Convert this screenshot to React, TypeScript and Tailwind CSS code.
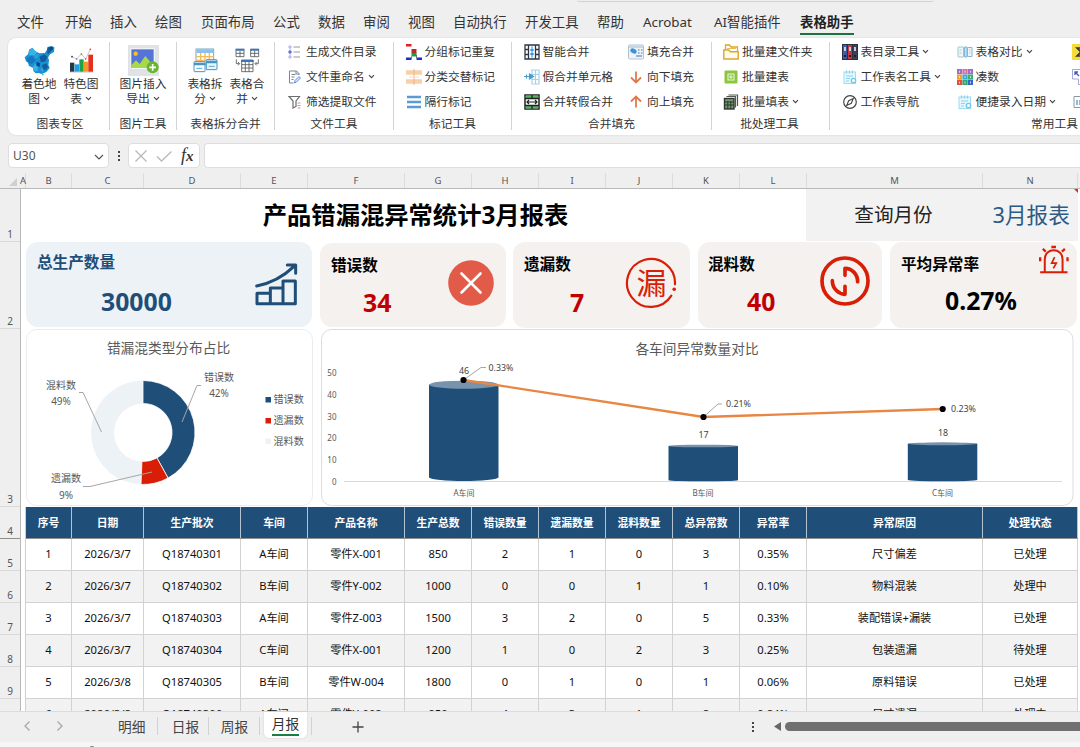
import React from "react";
import type { ReactNode } from "react";

const Chevron = () => (
  <svg className="ml-[3px] inline-block h-[7px] w-[7px] shrink-0" viewBox="0 0 7 7" fill="none" stroke="#444" strokeWidth="1.1">
    <path d="M1 2.2 3.5 4.7 6 2.2" />
  </svg>
);

/* ---------- large ribbon icons ---------- */

const MapIcon = () => (
  <svg className="h-[31px] w-[31px]" viewBox="73 129 94 94">
    <path fill="#1c8fd0" d="M75 166l10-9 4-14 10-6 7 10 14 7 16-1 6-8 2-10 12-3 9 4-1 14-12 7-6 10 3 8-2 14 4 10-10 12-9 4-6 2-8-3-10 1-7-8-1-9-12-5-3-11-6-4z" />
    <path fill="#36b3e6" d="M89 145l10-7 7 9 8 5-10 9-17-1zM100 195l8-10 8 8-2 16-8-1-6-6z" />
    <path fill="#0f5f9e" d="M143 144l4-9 8 2-2 14-8 6zM120 165l14-8 10 8-6 14-14 2zM128 190l12-6 6 10-6 10-10 2z" />
    <path fill="#1478be" d="M80 171l18-10 10 14-12 12-12-6z" />
    <path fill="#0b4a86" d="M150 135l10-1 1 9-9 5zM112 180l10 4-2 12-10-4z" />
    <path fill="#2ba4dd" d="M104 160l14-4-2 10-10 4zM122 202l8-4 4 8-6 6z" />
    <circle cx="130" cy="219" r="2.500" fill="#35b8a8" />
  </svg>
);

const ChartIcon = () => (
  <svg className="h-[25px] w-[25px]" viewBox="208 139 75 75">
    <rect x="210" y="209" width="72" height="4" fill="#cfd3d6" />
    <rect x="211" y="183" width="13" height="27" fill="#263846" />
    <rect x="225" y="188" width="13" height="22" fill="#1aa0e8" />
    <rect x="239" y="173" width="13" height="37" fill="#20a04a" />
    <rect x="253" y="180" width="13" height="30" fill="#f29a1f" />
    <rect x="266" y="159" width="14" height="51" fill="#e3311d" />
    <path d="M217 165l14 7 14-15 13 15 14-29" fill="none" stroke="#c9a0a0" strokeWidth="2" />
    <circle cx="217" cy="165" r="2.500" fill="#263846" />
    <circle cx="231" cy="172" r="2.500" fill="#3b6fe0" />
    <circle cx="245" cy="157" r="2.500" fill="#20a04a" />
    <circle cx="258" cy="172" r="2.500" fill="#e3311d" />
    <circle cx="272" cy="143" r="2.500" fill="#e3311d" />
  </svg>
);

const PictureIcon = () => (
  <svg className="h-[31px] w-[31px]" viewBox="384 131 93 93">
    <rect x="384" y="131" width="93" height="93" fill="#dfe3e6" />
    <rect x="391" y="141" width="73" height="62" rx="3" fill="#f4f7fb" />
    <rect x="394" y="144" width="67" height="56" fill="#5474d6" />
    <circle cx="407" cy="157" r="6.500" fill="#fbc02d" />
    <path d="M394 200v-8l14-15 11 11 17-24 25 30v6z" fill="#a8d94c" />
    <circle cx="458" cy="198" r="18" fill="#6ab52f" />
    <path d="M458 188v20M448 198h20" stroke="#fff" strokeWidth="5" />
  </svg>
);

const SplitIcon = () => (
  <svg className="h-[25px] w-[25px]" viewBox="578 139 75 75">
    <rect x="587" y="142" width="53" height="46" fill="#fff" stroke="#6fa8d6" strokeWidth="3" />
    <rect x="589" y="143" width="50" height="11" fill="#8fc0e6" />
    <path d="M588 165h52M588 176h52M601 154v34M614 154v34M627 154v34" stroke="#f3b95f" strokeWidth="4" />
    <rect x="581" y="180" width="33" height="30" rx="2" fill="#fff" stroke="#4a94c4" strokeWidth="3" />
    <path d="M581 187h33" stroke="#4a94c4" strokeWidth="7" />
    <rect x="618" y="174" width="32" height="30" rx="2" fill="#e9f5fc" stroke="#4a94c4" strokeWidth="3" />
    <path d="M618 181h32" stroke="#4a94c4" strokeWidth="7" />
    <path d="M588 200h18M625 194h18" stroke="#56abd8" strokeWidth="3" />
  </svg>
);

const MergeIcon = () => (
  <svg className="h-[25px] w-[25px]" viewBox="704 140 75 75" fill="none">
    <g stroke="#555" strokeWidth="2.500">
      <path d="M707 144h24v22h-24zM707 156h24M719 148v18M751 144h24v22h-24zM751 156h24M763 148v18" />
      <path d="M724 176h34v35h-34zM724 190h34M724 200h34M735 182v29M746 182v29" />
      <path d="M708 174v13h9M774 174v13h-9M713 182l5 5-5 5M769 182l-5 5 5 5" />
    </g>
    <path d="M706 145h26M750 145h26M722 179h38" stroke="#3d74b8" strokeWidth="6" />
  </svg>
);

/* ---------- small ribbon icons ---------- */

const S = ({ children }: { children: ReactNode }) => (
  <svg className="h-4 w-4 shrink-0" viewBox="0 0 16 16" fill="none">
    {children}
  </svg>
);

const icons: Record<string, ReactNode> = {
  list: (
    <S>
      <path d="M6.500 3h6.500M6.500 8h6.500M6.500 13h6.500" stroke="#98989c" strokeWidth="1.100" />
      <path d="M2 2h2v2H2zM2 12h2v2H2z" stroke="#a5ade6" />
      <path d="M3 4v8" stroke="#b9c0f0" strokeWidth=".8" />
      <circle cx="3" cy="8" r="1.700" fill="#5b6ee1" />
    </S>
  ),
  rename: (
    <S>
      <path d="M12 6V4.500L9.500 2H2.500v12h4" stroke="#7b8590" />
      <path d="M4.500 5.500h4M4.500 8h3M4.500 10.500h2M9 2v3h3" stroke="#7b8590" />
      <path d="M7.500 14l.5-2.500 4-4 1.500 1.500-4 4z" stroke="#5b8de8" fill="#dce8ff" />
    </S>
  ),
  filter: (
    <S>
      <path d="M2 2.500h10.500L9 7v5.500L6 14V7z" stroke="#6e6e72" strokeWidth="1.200" />
      <path d="M10.500 9h3M10.500 11.500h3M10.500 14h3" stroke="#e58a96" />
    </S>
  ),
  dup: (
    <S>
      <path d="M0 1.300h5.500" stroke="#e21f1f" strokeWidth="2.500" />
      <path d="M5.500 5h5v4.500h-5z" fill="#b82a2a" />
      <path d="M5.500 9h5v3.500h-5z" fill="#16a03a" />
      <path d="M0 14.700h5.500M10.500 14.700H16" stroke="#2727cf" strokeWidth="2.500" />
      <path d="M5.500 12.500v2M10.500 11v3" stroke="#555" strokeWidth=".8" />
    </S>
  ),
  alt: (
    <S>
      <path d="M0 3.500h16M0 12.500h16" stroke="#f7cfa8" strokeWidth="4.600" />
      <path d="M8 0v16" stroke="#efb488" />
      <path d="M3 8h10" stroke="#f7dcc4" />
    </S>
  ),
  stripes: (
    <S>
      <path d="M1 3h14M1 8h14M1 13h14" stroke="#5b9bd5" strokeWidth="2.600" />
    </S>
  ),
  smart: (
    <S>
      <path d="M1 1h14v14H1zM4.500 1v14M11.500 1v14M1 5.500h3.500M1 10.500h3.500M11.500 5.500H15M11.500 10.500H15" stroke="#2d3642" strokeWidth="1.300" />
      <path d="M8 2.500V7M8 13.500V9M6.300 5.500 8 7.200l1.700-1.700M6.300 10.500 8 8.800l1.700 1.700" stroke="#3894e0" strokeWidth="1.200" />
    </S>
  ),
  fakeMerge: (
    <S>
      <path d="M7 1h8v14H8V1M7 5.500h8M7 10.500h8M11.500 1v14" stroke="#a5d2e8" strokeWidth="1.200" />
      <path d="M0 7.500h7M2.500 5.500v4M5.500 5 9.500 7.500 5.500 10z" stroke="#4a9dcb" strokeWidth="1.200" fill="#4a9dcb" />
    </S>
  ),
  toFake: (
    <S>
      <rect x="1" y="1" width="14" height="14" fill="#fff" stroke="#222" strokeWidth="1.500" />
      <path d="M1.800 2.800h12.400M1.800 13.200h12.400" stroke="#55b560" strokeWidth="2.500" />
      <path d="M1 4.500h14M1 11.500h14M8 1v3.500M8 11.500V15" stroke="#222" strokeWidth="1.300" />
      <path d="M3 8h10M5 6 3 8l2 2M11 6l2 2-2 2" stroke="#222" strokeWidth="1.200" />
    </S>
  ),
  fillMerge: (
    <S>
      <rect x=".5" y="1" width="15" height="14" rx="1" fill="#eef3f8" stroke="#b3c2d1" />
      <path d="M1 3h14" stroke="#c9d6e3" strokeWidth="2" />
      <ellipse cx="5.500" cy="7" rx="3.300" ry="2.300" transform="rotate(25 5.500 7)" fill="#3a93d4" />
      <path d="M10 6h1.500M13 6h1.500M10 9h1.500M13 9h1.500M8 12h6" stroke="#7e9cc7" strokeWidth="1.300" />
    </S>
  ),
  down: (
    <S>
      <path d="M8 2.500v11M3 8.500l5 5 5-5" stroke="#de7b4c" strokeWidth="1.800" />
    </S>
  ),
  up: (
    <S>
      <path d="M8 13.500v-11M3 7.500l5-5 5 5" stroke="#de7b4c" strokeWidth="1.800" />
    </S>
  ),
  folder: (
    <S>
      <path d="M2.500 6V1h4l1.500 2h6.500v4" stroke="#d9a92b" strokeWidth="1.300" />
      <path d="M.8 6h5l1.500 1.800H15.200V15H.8z" fill="#fffaf0" stroke="#d9a92b" strokeWidth="1.400" />
      <path d="M4 4.500h9" stroke="#e2bd58" />
    </S>
  ),
  newSheet: (
    <S>
      <rect x="1.500" y="1.500" width="13" height="13" rx="1" fill="#8cc63f" />
      <path d="M5 5h6v6H5zM8 6v4M6 8h4" stroke="#e9f6d7" strokeWidth="1.100" />
    </S>
  ),
  fillSheet: (
    <S>
      <path d="M5.500 1h9v11M3.500 2.500h9v11" stroke="#555" strokeWidth="1.200" />
      <rect x="1.500" y="4.500" width="9.500" height="10.500" fill="#69a06b" stroke="#333" strokeWidth="1.400" />
      <path d="M2 8h9M2 11h9M4.800 7v8M7.800 7v8" stroke="#333" />
    </S>
  ),
  books: (
    <S>
      <rect x=".5" y=".5" width="4.800" height="15" fill="#3a5fae" stroke="#2b3140" />
      <rect x="5.500" y=".5" width="4.800" height="15" fill="#c7383f" stroke="#2b3140" />
      <rect x="10.600" y=".5" width="4.900" height="15" fill="#3c4054" stroke="#2b3140" />
      <path d="M2 3h2v4H2zM7 3h2v4H7zM12 3h2v4h-2z" fill="#c5cbe0" />
      <path d="M3 11v2M8 11v2M13 11v2" stroke="#151a25" strokeWidth="1.800" />
    </S>
  ),
  sheetName: (
    <S>
      <rect x="2" y="3" width="11.500" height="11.500" fill="#e6f7fd" stroke="#9edcf2" />
      <path d="M4.500 1.500v3M7.500 1.500v3M10.500 1.500v3M4 7h7M4 9.500h4M4 12h3" stroke="#8ad3ee" strokeWidth="1.200" />
      <circle cx="11.500" cy="11.500" r="2.200" fill="#fff" stroke="#6cc8ec" strokeWidth="1.300" />
    </S>
  ),
  compass: (
    <S>
      <circle cx="8" cy="8" r="6.300" stroke="#444" strokeWidth="1.200" />
      <path d="M11.300 4.500 9.300 9.300 4.700 11.500 6.700 6.700z" stroke="#444" strokeWidth="1.100" />
    </S>
  ),
  compare: (
    <S>
      <rect x="1" y="3" width="5.500" height="10" rx=".5" fill="#f0f7f7" stroke="#9cc6cb" />
      <path d="M7.500 3H10v10H7.500z" fill="#c8e2ef" stroke="#86b7d8" />
      <path d="M10.500 3.500H15v9h-4.500z" fill="#eef5fb" stroke="#86b7d8" />
      <path d="M2.500 6h2M2.500 9h2M12 6h1.500M12 9h1.500" stroke="#a5cbe0" />
    </S>
  ),
  numbers: (
    <S>
      <path d="M0 0h5.300v5.300H0z" fill="#9b6fc7" />
      <path d="M5.500 0h5v5.300h-5z" fill="#df6f9c" />
      <path d="M10.700 0H16v5.300h-5.300z" fill="#a867cf" />
      <path d="M0 5.500h5.300v5H0z" fill="#f0a32a" />
      <path d="M5.500 5.500h5v5h-5z" fill="#38a9e0" />
      <path d="M10.700 5.500H16v5h-5.300z" fill="#37b36b" />
      <path d="M0 10.700h5.300V16H0z" fill="#e64b3c" />
      <path d="M5.500 10.700h5V16h-5z" fill="#2ea66f" />
      <path d="M10.700 10.700H16V16h-5.300z" fill="#3565c5" />
      <path d="M2.500 1.700v2M8 1.700v2M13.500 1.700v2M2.500 7v2M8 7v2M13.500 7v2M2.500 12.500v2M8 12.500v2M13.500 12.500v2" stroke="#fff" strokeOpacity=".7" />
    </S>
  ),
  sum: (
    <S>
      <rect width="16" height="16" fill="#f3dc3c" />
      <path d="M12 4H5l4 4-4 4h7" stroke="#333" strokeWidth="1.600" />
    </S>
  ),
  expand: (
    <S>
      <path d="M.5 10V.5H14M.5 10h6v5.500H16" stroke="#a3a8d8" />
      <path d="M3 3l4 4M3 6V3h3" stroke="#4257c9" strokeWidth="1.300" />
    </S>
  ),
  panel: (
    <S>
      <path d="M2 2.500h14v11H2z" stroke="#8a97a5" />
      <path d="M5 6v5M8 6v5M11 7h4" stroke="#5d9bc9" strokeWidth="1.400" />
    </S>
  ),
};

/* ---------- ribbon ---------- */

type Cmd = { icon: string; text: string; menu?: boolean };

const CmdColumn = ({ items, className }: { items: Cmd[]; className: string }) => (
  <div className={`flex shrink-0 flex-col ${className}`}>
    {items.map((c, i) => (
      <div key={i} className="flex h-[25px] items-center whitespace-nowrap">
        {icons[c.icon]}
        <span className="ml-[3px]">{c.text}</span>
        {c.menu && <Chevron />}
      </div>
    ))}
  </div>
);

const Group = ({ label, className, children, labelClass = "text-center" }: { label: string; className: string; children: ReactNode; labelClass?: string }) => (
  <div className={`flex h-full shrink-0 flex-col ${className}`}>
    <div className="flex h-[76px] pt-[1px]">{children}</div>
    <div className={`h-[18px] whitespace-nowrap leading-[19px] ${labelClass}`}>{label}</div>
  </div>
);

const Divider = () => <div className="mt-1 h-[88px] w-px shrink-0 bg-[#d4d4d4]" />;

const BigButton = ({ icon, first, second, className }: { icon: ReactNode; first: string; second: string; className: string }) => (
  <div className={`flex shrink-0 flex-col items-center pt-[5px] ${className}`}>
    <div className="flex h-[32px] items-center justify-center">{icon}</div>
    <div className="h-[15px] whitespace-nowrap leading-[15px]">{first}</div>
    <div className="flex h-[14px] items-center leading-[14px]">
      {second}
      <Chevron />
    </div>
  </div>
);

const Ribbon = () => (
  <div className="ml-2 flex h-[97px] w-[1072px] overflow-hidden rounded-l-lg bg-white text-[11.750px] text-[#333] shadow-[0_0_2px_rgba(0,0,0,0.14)]">
    <Group label="图表专区" className="w-[101px]" labelClass="pl-[3px] text-center">
      <BigButton icon={<MapIcon />} first="着色地" second="图" className="ml-[10px] w-[42px]" />
      <BigButton icon={<ChartIcon />} first="特色图" second="表" className="w-[42px]" />
    </Group>
    <Divider />
    <Group label="图片工具" className="w-[66px]">
      <BigButton icon={<PictureIcon />} first="图片插入" second="导出" className="w-full" />
    </Group>
    <Divider />
    <Group label="表格拆分合并" className="w-[97px]">
      <BigButton icon={<SplitIcon />} first="表格拆" second="分" className="ml-[7px] w-[42px]" />
      <BigButton icon={<MergeIcon />} first="表格合" second="并" className="w-[42px]" />
    </Group>
    <Divider />
    <Group label="文件工具" className="w-[118px]">
      <CmdColumn
        className="pl-[12px]"
        items={[
          { icon: "list", text: "生成文件目录" },
          { icon: "rename", text: "文件重命名", menu: true },
          { icon: "filter", text: "筛选提取文件" },
        ]}
      />
    </Group>
    <Divider />
    <Group label="标记工具" className="w-[117px]">
      <CmdColumn
        className="pl-[11.500px]"
        items={[
          { icon: "dup", text: "分组标记重复" },
          { icon: "alt", text: "分类交替标记" },
          { icon: "stripes", text: "隔行标记" },
        ]}
      />
    </Group>
    <Divider />
    <Group label="合并填充" className="w-[199px]">
      <CmdColumn
        className="w-[116px] pl-[11.500px]"
        items={[
          { icon: "smart", text: "智能合并" },
          { icon: "fakeMerge", text: "假合并单元格" },
          { icon: "toFake", text: "合并转假合并" },
        ]}
      />
      <CmdColumn
        className=""
        items={[
          { icon: "fillMerge", text: "填充合并" },
          { icon: "down", text: "向下填充" },
          { icon: "up", text: "向上填充" },
        ]}
      />
    </Group>
    <Divider />
    <Group label="批处理工具" className="w-[117px]" labelClass="pr-[2px] text-center">
      <CmdColumn
        className="pl-[11px]"
        items={[
          { icon: "folder", text: "批量建文件夹" },
          { icon: "newSheet", text: "批量建表" },
          { icon: "fillSheet", text: "批量填表", menu: true },
        ]}
      />
    </Group>
    <Divider />
    <Group label="常用工具" className="w-[260px]" labelClass="pl-[201px]">
      <CmdColumn
        className="w-[126.500px] pl-[11.500px]"
        items={[
          { icon: "books", text: "表目录工具", menu: true },
          { icon: "sheetName", text: "工作表名工具", menu: true },
          { icon: "compass", text: "工作表导航" },
        ]}
      />
      <CmdColumn
        className="w-[115.500px]"
        items={[
          { icon: "compare", text: "表格对比", menu: true },
          { icon: "numbers", text: "凑数" },
          { icon: "sheetName", text: "便捷录入日期", menu: true },
        ]}
      />
      <CmdColumn
        className=""
        items={[
          { icon: "sum", text: "" },
          { icon: "expand", text: "" },
          { icon: "panel", text: "" },
        ]}
      />
    </Group>
  </div>
);

const menuTabs = [
  ["文件", "w-[48px]"],
  ["开始", "w-[45px]"],
  ["插入", "w-[45px]"],
  ["绘图", "w-[46px]"],
  ["页面布局", "w-[72px]"],
  ["公式", "w-[45px]"],
  ["数据", "w-[45px]"],
  ["审阅", "w-[45px]"],
  ["视图", "w-[45px]"],
  ["自动执行", "w-[72px]"],
  ["开发工具", "w-[72px]"],
  ["帮助", "w-[46px]"],
  ["Acrobat", "w-[71px]"],
  ["AI智能插件", "w-[86px]"],
];

const MenuBar = () => (
  <div className="flex h-[36px] shrink-0 pl-[17px] pt-[9px] text-[13.400px] leading-[23px] text-[#333]">
    {menuTabs.map(([t, w]) => (
      <div key={t} className={`shrink-0 whitespace-nowrap ${w}`}>
        {t}
      </div>
    ))}
    <div className="h-[24px] shrink-0 whitespace-nowrap border-b-2 border-[#1b7440] font-bold text-[#222]">表格助手</div>
  </div>
);

const FormulaBar = () => (
  <div className="flex h-[25px] items-stretch pl-2 text-[12px] text-[#555]">
    <div className="flex w-[101px] items-center justify-between rounded-[4px] border border-[#dedede] bg-white pl-[4px] pr-[3px]">
      <span>U30</span>
      <svg className="mt-[2px] h-3 w-3" viewBox="0 0 12 12" fill="none" stroke="#555" strokeWidth="1.200">
        <path d="M2 4l4 4 4-4" />
      </svg>
    </div>
    <div className="flex w-[19px] flex-col items-center justify-center gap-[2px] pl-px">
      <i className="h-[2px] w-[2px] bg-[#444]" />
      <i className="h-[2px] w-[2px] bg-[#444]" />
      <i className="h-[2px] w-[2px] bg-[#444]" />
    </div>
    <div className="flex w-[72px] items-center rounded-[4px] border border-[#dedede] bg-white pl-[5px]">
      <svg className="h-[14px] w-[38px]" viewBox="0 0 38 14" fill="none" stroke="#b9b9b9" strokeWidth="1.300">
        <path d="M1.500 1.500l11 11M12.500 1.500l-11 11M23 7.500l4.500 4.500L37.500 2.500" />
      </svg>
      <span className="ml-[9px] font-['Liberation_Serif',serif] text-[18px] italic leading-[18px] text-[#333]">
        f<span className="text-[15px] font-bold">x</span>
      </span>
    </div>
    <div className="ml-[4px] w-[876px] rounded-l-[4px] border border-r-0 border-[#dedede] bg-white" />
  </div>
);

/* ---------- sheet ---------- */

const columnHeads = [
  ["A", "w-[5px]"],
  ["B", "w-[46px]"],
  ["C", "w-[72px]"],
  ["D", "w-[97px]"],
  ["E", "w-[67px]"],
  ["F", "w-[97px]"],
  ["G", "w-[67px]"],
  ["H", "w-[67px]"],
  ["I", "w-[67px]"],
  ["J", "w-[67px]"],
  ["K", "w-[67px]"],
  ["L", "w-[67px]"],
  ["M", "w-[176px]"],
  ["N", "w-[95px]"],
];

const ColumnHeader = () => (
  <div className="flex h-[16px] shrink-0 border-b border-[#b9b9b9] text-[9.500px] leading-[16px] text-[#555]">
    <div className="flex w-[21px] items-end justify-end pb-[2px] pr-[4px]">
      <svg className="h-2 w-2" viewBox="0 0 8 8">
        <path d="M8 0v8H0z" fill="#cfcfcf" />
      </svg>
    </div>
    {columnHeads.map(([c, w]) => (
      <div key={c} className={`flex shrink-0 justify-center border-r border-[#dcdcdc] ${w}`}>
        {c}
      </div>
    ))}
  </div>
);

const rowHeads = [
  ["1", "h-[53px] border-[#d9d9d9]"],
  ["2", "h-[87px] border-[#d9d9d9]"],
  ["3", "h-[178px] border-[#d9d9d9]"],
  ["4", "h-[32px] border-[#8f8f8f]"],
  ["5", "h-[32px] border-[#d9d9d9]"],
  ["6", "h-[32px] border-[#d9d9d9]"],
  ["7", "h-[32px] border-[#d9d9d9]"],
  ["8", "h-[32px] border-[#d9d9d9]"],
  ["9", "h-[32px] border-[#d9d9d9]"],
  ["", "h-[32px] border-[#d9d9d9]"],
];

const RowHeader = () => (
  <div className="flex w-[21px] shrink-0 flex-col border-r border-[#b9b9b9] text-[10px] text-[#555]">
    {rowHeads.map(([r, h], i) => (
      <div key={i} className={`flex shrink-0 items-end justify-center border-b leading-[13px] ${h}`}>
        {r}
      </div>
    ))}
  </div>
);

const GrowthIcon = () => (
  <svg className="h-[44px] w-[44px]" viewBox="764 380 132 132" fill="none" stroke="#1f4e79" strokeWidth="9" strokeLinejoin="round" strokeLinecap="round">
    <path d="M773 505V474h40v31zM813 505V458h38v47zM851 505V437h37v68z" />
    <path d="M772 452c45-9 82-30 112-59M864 389h25v25" />
  </svg>
);

const CrossIcon = () => (
  <svg className="h-[46px] w-[46px]" viewBox="0 0 46 46">
    <circle cx="23" cy="23" r="22.800" fill="#e25a48" />
    <path d="M13.500 13.500l19 19M32.500 13.500l-19 19" stroke="#fff" strokeWidth="2.600" strokeLinecap="round" />
  </svg>
);

const LeakIcon = () => (
  <svg className="h-[52px] w-[54px]" viewBox="0 0 54 52" fill="none">
    <path d="M46.350 38.700A24 24 0 1 1 49.970 27.300" stroke="#d81e06" strokeWidth="2.200" strokeLinecap="round" />
    <circle cx="49.200" cy="32.300" r="1.800" fill="#d81e06" />
    <text x="26.500" y="37" textAnchor="middle" fontSize="30" fill="#d81e06">
      漏
    </text>
  </svg>
);

const MixIcon = () => (
  <svg className="h-[50px] w-[50px]" viewBox="391 258 150 150" fill="none" stroke="#d81e06" strokeLinecap="round" strokeLinejoin="round">
    <circle cx="466" cy="333" r="69" strokeWidth="11" />
    <path d="M466 316V295c20 0 38 17 38 40M466 349v24c-20-1-38-18-38-41" strokeWidth="11" />
  </svg>
);

const AlarmIcon = () => (
  <svg className="h-[29px] w-[30px]" viewBox="1046 225 90 88" fill="none" stroke="#d81e06" strokeWidth="6">
    <path d="M1049 308h83M1063 308v-40c0-36 54-36 54 0v40" />
    <path d="M1083 231h14M1057 237l9 8M1124 237l-9 8M1049 262v12M1132 262v12" strokeWidth="7" />
    <path d="M1093 262l-9 18h14l-9 16" strokeWidth="5" />
  </svg>
);

type CardProps = { box: string; title: string; titleClass: string; value: string; valueClass: string; icon: ReactNode; iconClass: string };

const StatCard = ({ box, title, titleClass, value, valueClass, icon, iconClass }: CardProps) => (
  <div className={`flex shrink-0 rounded-[12px] ${box}`}>
    <div className="flex flex-1 flex-col whitespace-nowrap font-bold">
      <div className={`text-[15.600px] leading-[20px] ${titleClass}`}>{title}</div>
      <div className={`text-[24.800px] leading-[30px] ${valueClass}`}>{value}</div>
    </div>
    <div className={iconClass}>{icon}</div>
  </div>
);

const Cards = () => (
  <div className="flex h-[87px] shrink-0 items-start">
    <StatCard box="ml-[5px] w-[286px] h-[85px] bg-[#edf2f6]" title="总生产数量" titleClass="mt-[10px] ml-[11px] text-[#1f4e79]" value="30000" valueClass="mt-[14px] ml-[75px] text-[#1f4e79]" icon={<GrowthIcon />} iconClass="mt-[20px] mr-[14px]" />
    <StatCard box="ml-[8px] mt-[1px] w-[186px] h-[84px] bg-[#f5f1ee]" title="错误数" titleClass="mt-[12px] ml-[11px] text-black" value="34" valueClass="mt-[12px] ml-[43px] text-[#c00000]" icon={<CrossIcon />} iconClass="mt-[17px] mr-[12px]" />
    <StatCard box="ml-[7px] w-[177px] h-[86px] bg-[#f5f1ee]" title="遗漏数" titleClass="mt-[12px] ml-[11px] text-black" value="7" valueClass="mt-[13px] ml-[57px] text-[#c00000]" icon={<LeakIcon />} iconClass="mt-[15px] mr-[11px]" />
    <StatCard box="ml-[8px] w-[184px] h-[86px] bg-[#f5f1ee]" title="混料数" titleClass="mt-[12px] ml-[10px] text-black" value="40" valueClass="mt-[12px] ml-[49px] text-[#c00000]" icon={<MixIcon />} iconClass="mt-[14px] mr-[12px]" />
    <StatCard box="ml-[8px] w-[187px] h-[86px] bg-[#f5f1ee]" title="平均异常率" titleClass="mt-[12px] ml-[11px] text-black" value="0.27%" valueClass="mt-[11px] ml-[55px] text-black" icon={<AlarmIcon />} iconClass="mt-[3px] mr-[8px]" />
  </div>
);

const CX = 143;
const CY = 432.5;
const ring = (from: number, to: number, r0 = 29, r1 = 52) => {
  const p = (f: number, r: number) => {
    const a = f * Math.PI * 2 - Math.PI / 2;
    return `${(CX + r * Math.cos(a)).toFixed(2)} ${(CY + r * Math.sin(a)).toFixed(2)}`;
  };
  const large = to - from > 0.5 ? 1 : 0;
  return `M${p(from, r1)}A${r1} ${r1} 0 ${large} 1 ${p(to, r1)}L${p(to, r0)}A${r0} ${r0} 0 ${large} 0 ${p(from, r0)}Z`;
};

const DonutPanel = () => (
  <svg className="ml-[5px] h-[177px] w-[288px] shrink-0" viewBox="26 329 288 177" fill="#595959">
    <rect x="26.500" y="329.500" width="286" height="176" rx="10" fill="#fff" stroke="#e9edf0" />
    <text x="168.500" y="353" fontSize="13.700" textAnchor="middle">错漏混类型分布占比</text>
    <path d={ring(0.506, 1)} fill="#edf2f6" />
    <path d={ring(0, 0.42)} fill="#1f4e79" stroke="#fff" strokeWidth=".8" />
    <path d={ring(0.42, 0.506)} fill="#d81e06" stroke="#fff" strokeWidth=".8" />
    <path d="M201 385.500h-4L182 422M79 392.500h4L101.500 432M83 486.500h7L152 472" fill="none" stroke="#a6a6a6" />
    <g fontSize="10" textAnchor="middle">
      <text x="219" y="380.500">错误数</text>
      <text x="219" y="397">42%</text>
      <text x="61" y="388.500">混料数</text>
      <text x="61" y="405">49%</text>
      <text x="66" y="482">遗漏数</text>
      <text x="66" y="498.500">9%</text>
    </g>
    <rect x="265.500" y="397" width="5.500" height="5.500" fill="#1f4e79" />
    <rect x="265.500" y="418" width="5.500" height="5.500" fill="#d81e06" />
    <rect x="265.500" y="438.500" width="5.500" height="5.500" fill="#edf2f6" />
    <g fontSize="10.100">
      <text x="273.500" y="403">错误数</text>
      <text x="273.500" y="424">遗漏数</text>
      <text x="273.500" y="445">混料数</text>
    </g>
  </svg>
);

const Cylinder = ({ x, top, ry }: { x: number; top: number; ry: number }) => (
  <g>
    <path d={`M${x} ${top}V${481.5 - ry}a35 ${ry} 0 0 0 69.500 0V${top}z`} fill="#1f4e79" />
    <ellipse cx={x + 34.75} cy={top} rx="34.750" ry={ry} fill="#7893ab" />
  </g>
);

const BarPanel = () => (
  <svg className="ml-[7px] h-[177px] w-[753px] shrink-0" viewBox="321 329 753 177" fill="#595959">
    <rect x="321.500" y="329.500" width="751.500" height="176" rx="10" fill="#fff" stroke="#dcdcdc" />
    <text x="697" y="353.500" fontSize="13.700" textAnchor="middle">各车间异常数量对比</text>
    <g fontSize="8" textAnchor="end">
      <text x="336.500" y="376">50</text>
      <text x="336.500" y="397.700">40</text>
      <text x="336.500" y="419.500">30</text>
      <text x="336.500" y="441.300">20</text>
      <text x="336.500" y="463">10</text>
      <text x="336.500" y="484.700">0</text>
    </g>
    <path d="M344 481.500h718" stroke="#d9d9d9" />
    <Cylinder x={429} top={384.7} ry={4} />
    <Cylinder x={668.5} top={446} ry={1.3} />
    <Cylinder x={907.8} top={443.8} ry={1.5} />
    <path d="M463.500 380 703.500 417 942.500 409" fill="none" stroke="#e88744" strokeWidth="2.300" />
    <path d="M463.500 380 481 367.500h5M703.500 417 718 404h4" fill="none" stroke="#a6a6a6" />
    <g fill="#000">
      <circle cx="463.500" cy="380" r="3.100" />
      <circle cx="703.500" cy="417" r="3.100" />
      <circle cx="942.700" cy="409" r="3.100" />
    </g>
    <g fontSize="8.900" textAnchor="middle" fill="#444">
      <text x="464" y="374">46</text>
      <text x="703.500" y="437.500">17</text>
      <text x="943" y="435.500">18</text>
      <text x="501" y="371">0.33%</text>
      <text x="738.500" y="407">0.21%</text>
      <text x="963.500" y="412">0.23%</text>
    </g>
    <g fontSize="8" textAnchor="middle">
      <text x="464" y="496">A车间</text>
      <text x="703" y="496">B车间</text>
      <text x="942.500" y="496">C车间</text>
    </g>
  </svg>
);

const heads = ["序号", "日期", "生产批次", "车间", "产品名称", "生产总数", "错误数量", "遗漏数量", "混料数量", "总异常数", "异常率", "异常原因", "处理状态"];

const rows = [
  ["1", "2026/3/7", "Q18740301", "A车间", "零件X-001", "850", "2", "1", "0", "3", "0.35%", "尺寸偏差", "已处理"],
  ["2", "2026/3/7", "Q18740302", "B车间", "零件Y-002", "1000", "0", "0", "1", "1", "0.10%", "物料混装", "处理中"],
  ["3", "2026/3/7", "Q18740303", "A车间", "零件Z-003", "1500", "3", "2", "0", "5", "0.33%", "装配错误+漏装", "已处理"],
  ["4", "2026/3/7", "Q18740304", "C车间", "零件X-001", "1200", "1", "0", "2", "3", "0.25%", "包装遗漏", "待处理"],
  ["5", "2026/3/8", "Q18740305", "B车间", "零件W-004", "1800", "0", "1", "0", "1", "0.06%", "原料错误", "已处理"],
  ["6", "2026/3/8", "Q18740306", "A车间", "零件Y-002", "950", "4", "3", "1", "8", "0.84%", "尺寸遗漏", "处理中"],
];

const grid = "grid grid-cols-[46px_72px_97px_67px_97px_67px_67px_67px_67px_67px_67px_176px_95px]";

const Table = () => (
  <div className="ml-[4px] w-[1053px] shrink-0 border-l border-[#cfcfcf] text-[11.200px] text-[#111]">
    <div className={`${grid} h-[32px] border-b border-[#8f8f8f] bg-[#1f4e79] font-bold text-white`}>
      {heads.map((h) => (
        <div key={h} className="flex items-center justify-center border-r border-[#b4c3d1] pt-px text-[10.800px]">
          {h}
        </div>
      ))}
    </div>
    {rows.map((r, i) => (
      <div key={r[0]} className={`${grid} h-[32px] ${i % 2 ? "bg-[#f2f2f2]" : "bg-white"}`}>
        {r.map((v, j) => (
          <div key={j} className="flex items-center justify-center border-b border-r border-[#d2d2d2]">
            {v}
          </div>
        ))}
      </div>
    ))}
  </div>
);

const Sheet = () => (
  <div className="flex h-[523px] shrink-0 overflow-hidden border-b border-[#dcdcdc]">
    <RowHeader />
    <div className="flex w-[1057px] shrink-0 flex-col bg-white">
      <div className="flex h-[53px] shrink-0">
        <div className="flex w-[785px] items-center justify-center pl-[4px] text-[24.300px] font-bold text-black">产品错漏混异常统计3月报表</div>
        <div className="flex h-[52px] w-[176px] items-center justify-center bg-[#f2f2f2] pr-px text-[19.600px] text-[#222]">查询月份</div>
        <div className="relative flex h-[52px] w-[96px] items-center justify-end bg-[#f2f2f2] pr-[8px] text-[21.700px] text-[#2c5a87]">
          3月报表
          <svg className="absolute right-0 top-0 h-1 w-1" viewBox="0 0 4 4">
            <path d="M0 0h4v4z" fill="#d92b2b" />
          </svg>
        </div>
      </div>
      <Cards />
      <div className="flex h-[178px] shrink-0">
        <DonutPanel />
        <BarPanel />
      </div>
      <Table />
    </div>
    <div className="w-[2px] shrink-0 bg-white" />
  </div>
);

const SheetTabs = () => (
  <div className="flex h-[30px] shrink-0 items-start bg-[#efefef] text-[13.700px] text-[#444]">
    <svg className="ml-[22px] mt-[8px] h-3 w-[43px]" viewBox="0 0 43 12" fill="none" stroke="#a6a6a6" strokeWidth="1.300">
      <path d="M7.500 1.500 3 6l4.500 4.500M35.500 1.500 40 6l-4.500 4.500" />
    </svg>
    <div className="ml-[53px] flex h-[31px] w-[39px] items-center">明细</div>
    <div className="mt-[5px] h-[18px] w-px bg-[#d2d2d2]" />
    <div className="flex h-[31px] w-[50px] items-center justify-center pl-[5px]">日报</div>
    <div className="mt-[5px] h-[18px] w-px bg-[#d2d2d2]" />
    <div className="flex h-[31px] w-[50px] items-center justify-center pl-px">周报</div>
    <div className="mt-[5px] h-[18px] w-px bg-[#d2d2d2]" />
    <div className="ml-[4px] flex h-[26px] w-[43px] justify-center rounded-b-[5px] bg-white shadow-[0_0_2px_rgba(0,0,0,0.15)]">
      <div className="h-[24px] border-b-2 border-[#1b7c45] text-[13.700px] leading-[24px] text-[#333]">月报</div>
    </div>
    <div className="ml-[4px] mt-[5px] h-[18px] w-px bg-[#d2d2d2]" />
    <svg className="ml-[40px] mt-[9px] h-3 w-3" viewBox="0 0 12 12" stroke="#444" strokeWidth="1.300">
      <path d="M6 .5v11M.5 6h11" />
    </svg>
    <div className="ml-[388px] mt-[10px] flex flex-col gap-[2px]">
      <i className="h-[2px] w-[2px] bg-[#444]" />
      <i className="h-[2px] w-[2px] bg-[#444]" />
      <i className="h-[2px] w-[2px] bg-[#444]" />
    </div>
    <svg className="ml-[20px] mt-[10px] h-[9px] w-[7px]" viewBox="0 0 7 9">
      <path d="M7 0v9L0 4.500z" fill="#666" />
    </svg>
    <div className="ml-[4px] mt-[10px] h-[9px] w-[295px] rounded-l-full bg-[#707070]" />
  </div>
);

export default function App() {
  return (
    <div className="flex h-[747px] w-[1080px] flex-col overflow-hidden bg-[#efefef] font-['Noto_Sans','Noto_Sans_CJK_SC',sans-serif]">
      <div className="ml-[577px] h-[2px] w-[357px] shrink-0 rounded-b border-b border-[#d2d2d2]" />
      <MenuBar />
      <Ribbon />
      <div className="h-[8px]" />
      <FormulaBar />
      <div className="h-[5px]" />
      <ColumnHeader />
      <Sheet />
      <SheetTabs />
      <div className="flex h-[5px] items-end bg-[#f6f6f6]">
        <div className="ml-[90px] h-[1px] w-[4px] rounded-t-full bg-[#888]" />
      </div>
    </div>
  );
}
